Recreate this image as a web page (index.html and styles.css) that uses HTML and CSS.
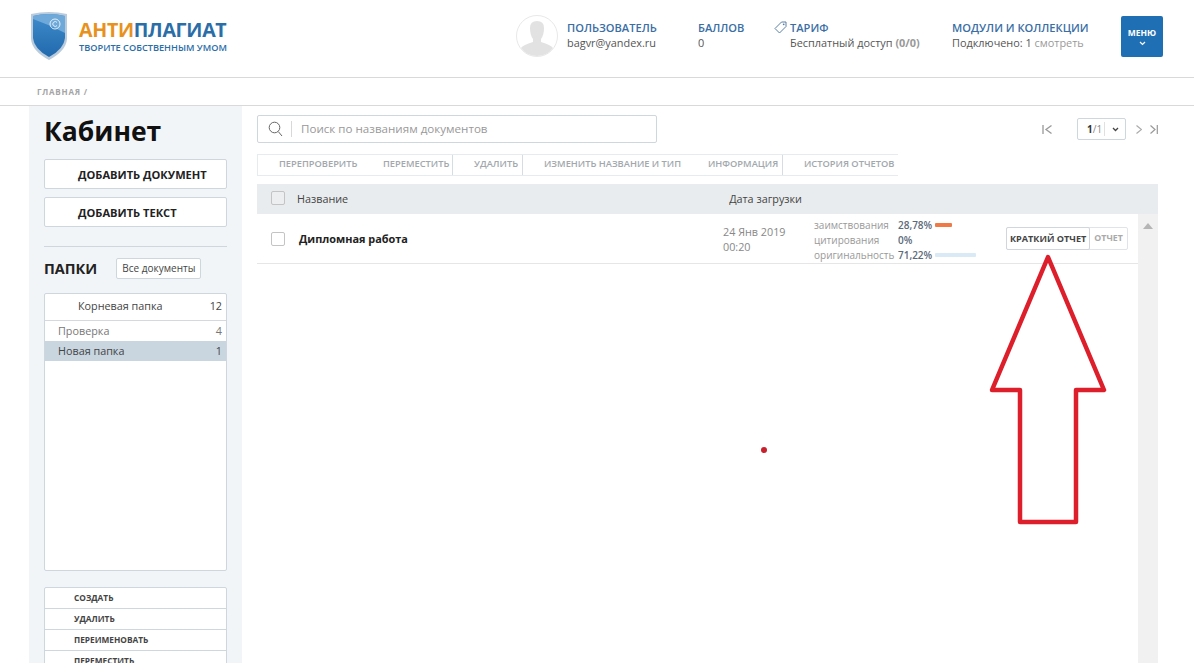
FILE: index.html
```html
<!DOCTYPE html>
<html lang="ru">
<head>
  <meta charset="UTF-8" />
  <title>Антиплагиат - Кабинет</title>
  <link rel="stylesheet" href="styles.css">
</head>
<body>

<header class="top">
  <div class="logo">
    <svg class="shield" width="38" height="50" viewBox="0 0 38 50">
      <defs>
        <linearGradient id="shieldFill" x1="0" y1="0" x2="0" y2="1">
          <stop offset="0" stop-color="#3f8ccb"/>
          <stop offset="1" stop-color="#2169ad"/>
        </linearGradient>
      </defs>
      <path d="M1 3 Q19 -1 37 3 L37 28 Q36 40 19 49 Q2 40 1 28 Z" fill="#b9cbdc"/>
      <path d="M3 5 Q19 1 35 5 L35 27 Q34 38 19 46 Q4 38 3 27 Z" fill="url(#shieldFill)"/>
      <path d="M3 5 Q19 1 35 5 L35 22 Q20 14 3 8 Z" fill="#6ea9da"/>
      <circle cx="25" cy="13" r="5" fill="none" stroke="#e4f0f9" stroke-width="1"/>
      <path d="M27 11.4 A2.4 2.4 0 1 0 27 14.6" fill="none" stroke="#e4f0f9" stroke-width="1"/>
    </svg>
    <div class="logo-text">
      <div class="logo-name"><span class="logo-orange">АНТИ</span>ПЛАГИАТ</div>
      <div class="logo-slogan">ТВОРИТЕ СОБСТВЕННЫМ УМОМ</div>
    </div>
  </div>

  <div class="top-right">
    <svg class="avatar" width="42" height="42" viewBox="0 0 42 42">
      <circle cx="21" cy="21" r="20.5" fill="#fff" stroke="#e8e8e8"/>
      <path d="M14 13 Q14 6 21 6 Q28 6 28 13 Q28 20 25 24 L25 27 Q35 30 37 33 Q31 41 21 41 Q11 41 5 33 Q7 30 17 27 L17 24 Q14 20 14 13 Z" fill="#e2e2e2"/>
    </svg>
    <div class="info info-user">
      <div class="info-title">ПОЛЬЗОВАТЕЛЬ</div>
      <div>bagvr@yandex.ru</div>
    </div>
    <div class="info info-points">
      <div class="info-title">БАЛЛОВ</div>
      <div>0</div>
    </div>
    <svg class="tag" width="13" height="13" viewBox="0 0 13 13">
      <path d="M7.5 1 H12 V5.5 L5.5 12 L1 7.5 Z" fill="none" stroke="#5b7fa6" stroke-width="1"/>
      <circle cx="9.7" cy="3.3" r="0.9" fill="#5b7fa6"/>
    </svg>
    <div class="info info-plan">
      <div class="info-title">ТАРИФ</div>
      <div>Бесплатный доступ <b class="muted">(0/0)</b></div>
    </div>
    <div class="info info-modules">
      <div class="info-title">МОДУЛИ И КОЛЛЕКЦИИ</div>
      <div>Подключено: 1 <span class="muted">смотреть</span></div>
    </div>
    <div class="menu-btn">
      <span>МЕНЮ</span>
      <svg width="7" height="5" viewBox="0 0 7 5"><path d="M1 1 L3.5 3.5 L6 1" fill="none" stroke="#fff" stroke-width="1.2"/></svg>
    </div>
  </div>
</header>

<div class="crumbs">ГЛАВНАЯ /</div>

<div class="page">
  <aside class="side">
    <h1>Кабинет</h1>
    <div class="add-btn">ДОБАВИТЬ ДОКУМЕНТ</div>
    <div class="add-btn">ДОБАВИТЬ ТЕКСТ</div>
    <hr>
    <div class="folders-head">
      <h2>ПАПКИ</h2>
      <span class="all-docs">Все документы</span>
    </div>
    <div class="folders">
      <div class="folder-root"><span>Корневая папка</span><span>12</span></div>
      <div class="folder"><span>Проверка</span><span>4</span></div>
      <div class="folder folder-active"><span>Новая папка</span><span>1</span></div>
    </div>
    <ul class="folder-actions">
      <li>СОЗДАТЬ</li>
      <li>УДАЛИТЬ</li>
      <li>ПЕРЕИМЕНОВАТЬ</li>
      <li>ПЕРЕМЕСТИТЬ</li>
    </ul>
  </aside>

  <main class="main">
    <div class="search-row">
      <div class="search">
        <svg width="15" height="16" viewBox="0 0 15 16">
          <circle cx="6.5" cy="6.5" r="5.3" fill="none" stroke="#666" stroke-width="1"/>
          <path d="M10.3 10.6 L14 15" stroke="#666" stroke-width="1"/>
        </svg>
        <span class="search-text">Поиск по названиям документов</span>
      </div>
      <div class="pager">
        <svg class="pager-first" width="10" height="9" viewBox="0 0 10 9"><path d="M1 0 V9 M9.500 .5 L4 4.500 L9.500 8.500" fill="none" stroke="#999" stroke-width="1.300"/></svg>
        <div class="pager-box">
          <span class="pager-num"><b>1</b>/1</span>
          <svg width="7" height="5" viewBox="0 0 7 5"><path d="M1 1 L3.500 3.500 L6 1" fill="none" stroke="#444" stroke-width="1.300"/></svg>
        </div>
        <svg class="pager-next" width="6" height="9" viewBox="0 0 6 9"><path d="M.5 .5 L5.500 4.500 L.5 8.500" fill="none" stroke="#aaa" stroke-width="1.200"/></svg>
        <svg width="8" height="9" viewBox="0 0 8 9"><path d="M.5 .5 L5 4.500 L.5 8.500 M7.300 0 V9" fill="none" stroke="#999" stroke-width="1.200"/></svg>
      </div>
    </div>

    <div class="tools">
      <span class="tool t1">ПЕРЕПРОВЕРИТЬ</span>
      <span class="tool t2 sep">ПЕРЕМЕСТИТЬ</span>
      <span class="tool t3 sep">УДАЛИТЬ</span>
      <span class="tool t4">ИЗМЕНИТЬ НАЗВАНИЕ И ТИП</span>
      <span class="tool t5 sep">ИНФОРМАЦИЯ</span>
      <span class="tool t6">ИСТОРИЯ ОТЧЕТОВ</span>
    </div>

    <div class="table-head">
      <span class="check"></span>
      <span class="col-name">Название</span>
      <span class="col-date">Дата загрузки</span>
    </div>

    <div class="table-body">
      <div class="rows">
        <div class="row">
          <span class="check"></span>
          <span class="doc-name">Дипломная работа</span>
          <span class="doc-date">24 Янв 2019<br>00:20</span>
          <div class="stats">
            <div class="stat"><span class="stat-label">заимствования</span><b>28,78%</b><i class="bar bar-orange"></i></div>
            <div class="stat"><span class="stat-label">цитирования</span><b>0%</b></div>
            <div class="stat"><span class="stat-label">оригинальность</span><b>71,22%</b><i class="bar bar-blue"></i></div>
          </div>
          <div class="report-btns">
            <span class="report-short">КРАТКИЙ ОТЧЕТ</span>
            <span class="report-full">ОТЧЕТ</span>
          </div>
        </div>
      </div>
      <div class="scroll">
        <svg width="10" height="6" viewBox="0 0 10 6"><path d="M0 6 L5 0 L10 6 Z" fill="#b5b5b5"/></svg>
      </div>
    </div>
  </main>
</div>

<!-- красная стрелка и точка поверх страницы -->
<svg class="arrow" width="118" height="272" viewBox="0 0 118 272">
  <path d="M59 3 L115 136 H87 V268 H31 V136 H3 Z" fill="none" stroke="#dc1f2b" stroke-width="4.500" stroke-linejoin="round"/>
</svg>
<span class="dot"></span>

</body>
</html>
```

FILE: styles.css
```css
html, body {
  margin: 0;
  padding: 0;
  height: 663px;
  overflow: hidden;
}
body {
  font-family: "Open Sans", sans-serif;
  font-size: 11px;
  color: #555;
  background: #fff;
  position: relative;
}

/* header */
.top {
  height: 77px;
  border-bottom: 1px solid #d9d9d9;
  display: flex;
  justify-content: space-between;
  padding: 0 31px 0 30px;
}
.logo {
  display: flex;
  align-items: flex-start;
  padding-top: 11px;
}
.shield {
  display: block;
}
.logo-text {
  margin: 7px 0 0 11px;
}
.logo-name {
  font-size: 19.600px;
  font-weight: 700;
  line-height: 24px;
  color: #2a6ea8;
  letter-spacing: -0.3px;
}
.logo-orange {
  color: #e8921e;
}
.logo-slogan {
  font-size: 9.200px;
  font-weight: 600;
  line-height: 11px;
  color: #2a6ea8;
}
.top-right {
  display: flex;
  align-items: flex-start;
  padding-top: 15px;
}
.avatar {
  display: block;
  margin-right: 9px;
}
.info {
  padding-top: 5px;
  line-height: 15px;
  font-size: 10.900px;
  color: #555;
}
.info-title {
  font-weight: 600;
  font-size: 11.100px;
  color: #3a6ea5;
}
.info-user { width: 131px; }
.info-points { width: 76px; }
.info-plan { width: 162px; }
.info-modules { width: 169px; }
.tag {
  margin: 6px 3px 0 0;
}
.muted {
  color: #999;
}
.menu-btn {
  width: 42px;
  height: 41px;
  margin-top: 1px;
  background: #1f6fb5;
  border-radius: 2px;
  color: #fff;
  font-size: 8.500px;
  font-weight: 700;
  display: flex;
  flex-direction: column;
  align-items: center;
  justify-content: center;
  gap: 3px;
}

.crumbs {
  height: 27px;
  line-height: 28px;
  border-bottom: 1px solid #d9d9d9;
  padding-left: 37px;
  font-size: 8px;
  font-weight: 700;
  letter-spacing: 0.8px;
  color: #a5a5a5;
}

/* layout */
.page {
  display: flex;
  padding-left: 29px;
}

/* sidebar */
.side {
  width: 183px;
  height: 557px;
  padding: 0 15px;
  background: #f2f5f8;
  flex-shrink: 0;
}
.side h1 {
  margin: 7px 0 9px;
  font-size: 26.500px;
  line-height: 37px;
  font-weight: 700;
  color: #111;
}
.add-btn {
  height: 28px;
  line-height: 30px;
  margin-bottom: 8px;
  padding-left: 33px;
  background: #fff;
  border: 1px solid #ced6de;
  border-radius: 2px;
  font-size: 11.100px;
  font-weight: 700;
  color: #222;
}
.side hr {
  border: 0;
  border-top: 1px solid #ced6de;
  margin: 19px 0 11px;
}
.folders-head {
  display: flex;
  align-items: center;
  height: 21px;
}
.folders-head h2 {
  margin: 0 19px 0 0;
  font-size: 14.500px;
  font-weight: 700;
  color: #222;
}
.all-docs {
  height: 19px;
  line-height: 19px;
  padding: 0 5px;
  background: #fff;
  border: 1px solid #ced6de;
  border-radius: 2px;
  font-size: 10px;
  color: #444;
}
.folders {
  height: 276px;
  margin-top: 14px;
  background: #fff;
  border: 1px solid #ced6de;
  border-radius: 2px;
  font-size: 10.800px;
}
.folder-root {
  display: flex;
  justify-content: space-between;
  height: 26px;
  line-height: 24px;
  padding: 0 4px 0 33px;
  border-bottom: 1px solid #d5d9dd;
  color: #444;
}
.folder {
  display: flex;
  justify-content: space-between;
  height: 20px;
  line-height: 20px;
  padding: 0 4px 0 13px;
  color: #777;
}
.folder-active {
  background: #c9d6e0;
  color: #444;
}
.folder-actions {
  list-style: none;
  margin: 16px 0 0;
  padding: 0;
  background: #fff;
  border: 1px solid #ced6de;
  border-radius: 2px;
}
.folder-actions li {
  height: 20px;
  line-height: 20px;
  padding-left: 29px;
  border-bottom: 1px solid #ced6de;
  font-size: 8.300px;
  font-weight: 700;
  color: #444;
}

/* main */
.main {
  width: 901px;
  margin-left: 15px;
}
.search-row {
  display: flex;
  justify-content: space-between;
  align-items: center;
  padding-top: 9px;
}
.search {
  width: 398px;
  height: 26px;
  display: flex;
  align-items: center;
  background: #fff;
  border: 1px solid #ced6de;
  border-radius: 2px;
}
.search svg {
  margin-left: 10px;
}
.search-text {
  margin-left: 8px;
  padding-left: 9px;
  line-height: 16px;
  border-left: 1px solid #d8d8d8;
  font-size: 11.600px;
  color: #999;
}
.pager {
  display: flex;
  align-items: center;
}
.pager-first {
  margin-right: 25px;
}
.pager-next {
  margin-right: 8px;
}
.pager-box {
  display: flex;
  align-items: center;
  width: 49px;
  height: 22px;
  margin-right: 10px;
  box-sizing: border-box;
  border: 1px solid #ced6de;
  border-radius: 2px;
  font-size: 10px;
  color: #888;
}
.pager-num {
  width: 27px;
  box-sizing: border-box;
  padding-left: 9px;
  border-right: 1px solid #e0e0e0;
  line-height: 14px;
}
.pager-num b {
  color: #333;
}
.pager-box svg {
  margin-left: 7px;
}
.tools {
  display: flex;
  width: 641px;
  height: 22px;
  margin-top: 11px;
  border-top: 1px solid #e6ebef;
  border-bottom: 1px solid #e6ebef;
  box-sizing: border-box;
  border-left: 1px solid #e6ebef;
}
.tool {
  line-height: 18px;
  font-size: 9.300px;
  font-weight: 600;
  color: #a2a8ad;
  box-sizing: border-box;
  white-space: nowrap;
}
.sep {
  border-right: 1px solid #d4dde4;
}
.t1 { width: 125px; padding-left: 21px; }
.t2 { width: 70px; }
.t3 { width: 70px; padding-left: 21px; }
.t4 { width: 185px; padding-left: 21px; }
.t5 { width: 75px; }
.t6 { padding-left: 21px; }

.table-head {
  display: flex;
  align-items: center;
  height: 30px;
  box-sizing: border-box;
  padding-bottom: 2px;
  margin-top: 8px;
  background: #e9ecee;
  font-size: 10.800px;
  color: #444;
}
.check {
  display: block;
  width: 12px;
  height: 12px;
  margin-left: 14px;
  flex-shrink: 0;
  background: #fff;
  border: 1px solid #c4c4c4;
  border-radius: 2px;
}
.table-head .check {
  background: #eceeef;
}
.col-name {
  margin-left: 12px;
}
.col-date {
  margin-left: 381px;
}
.table-body {
  display: flex;
  height: 449px;
}
.rows {
  flex: 1;
}
.row {
  display: flex;
  align-items: center;
  height: 49px;
  border-bottom: 1px solid #e6e6e6;
}
.doc-name {
  width: 424px;
  margin-left: 14px;
  font-size: 10.900px;
  font-weight: 700;
  color: #222;
}
.doc-date {
  width: 91px;
  font-size: 10.800px;
  line-height: 15px;
  color: #888;
}
.stats {
  width: 192px;
  box-sizing: border-box;
  padding-top: 3px;
  font-size: 10px;
  line-height: 15px;
  color: #999;
}
.stat {
  display: flex;
  align-items: center;
}
.stat-label {
  width: 84px;
}
.stat b {
  width: 37px;
  font-weight: 600;
  color: #5a6a7a;
}
.bar {
  display: block;
  height: 4px;
  border-radius: 1px;
}
.bar-orange {
  width: 17px;
  background: #ef7a45;
}
.bar-blue {
  width: 41px;
  background: #d9e9f5;
}
.report-btns {
  display: flex;
  height: 21px;
  border: 1px solid #e0e4e8;
  border-radius: 2px;
  line-height: 21px;
  font-size: 9.100px;
  font-weight: 700;
}
.report-short {
  padding: 0 3px;
  border: 1px solid #cfd6dc;
  margin: -1px;
  line-height: 21px;
  border-radius: 2px;
  color: #444;
  background: #fff;
}
.report-full {
  padding: 0 4px 0 5px;
  font-size: 8.800px;
  color: #aaa;
}
.scroll {
  width: 20px;
  background: #f1f1f1;
  padding-top: 9px;
  box-sizing: border-box;
}
.scroll svg {
  display: block;
  margin: 0 auto;
}

/* overlay */
.arrow {
  position: absolute;
  left: 989px;
  top: 254px;
}
.dot {
  position: absolute;
  left: 761px;
  top: 447px;
  width: 6px;
  height: 6px;
  border-radius: 50%;
  background: #c8202c;
}
```
